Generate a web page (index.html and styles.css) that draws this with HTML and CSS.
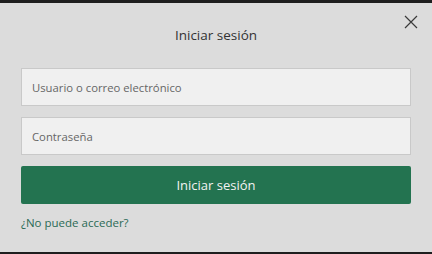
FILE: index.html
```html
<!DOCTYPE html>
<html lang="es">
<head>
<meta charset="utf-8">
<link rel="stylesheet" href="styles.css">
</head>
<body>
<div class="topbar"></div>
<div class="dialog">
  <button class="close" aria-label="Cerrar">
    <svg width="14" height="14" viewBox="0 0 14 14"><path d="M1 1L13 13M13 1L1 13" stroke="#3a3a3a" stroke-width="1.2" fill="none"/></svg>
  </button>
  <h1 class="title">Iniciar sesión</h1>
  <div class="field"><span class="ph">Usuario o correo electrónico</span></div>
  <div class="field"><span class="ph">Contraseña</span></div>
  <div class="btn">Iniciar sesión</div>
  <a class="link" href="#">¿No puede acceder?</a>
</div>
<div class="bottombar"></div>
</body>
</html>
```
FILE: styles.css
```css
html, body { margin: 0; padding: 0; }
body {
  width: 432px;
  height: 254px;
  overflow: hidden;
  background: #dcdcdc;
  font-family: "Open Sans", "Noto Sans", sans-serif;
  display: flex;
  flex-direction: column;
}
.topbar { height: 3px; background: #1e1e1e; flex: none; }
.bottombar { height: 2px; background: #1e1e1e; flex: none; }
.dialog {
  position: relative;
  flex: 1;
  display: flex;
  flex-direction: column;
  padding: 0 21px;
  background: #dcdcdc;
}
.close {
  position: absolute;
  top: 12px;
  right: 14px;
  width: 14px;
  height: 14px;
  padding: 0;
  border: 0;
  background: none;
  display: flex;
}
.title {
  margin: 22px 0 0;
  height: 20px;
  line-height: 20px;
  font-size: 13.5px;
  font-weight: 400;
  color: #333;
  text-align: center;
}
.field {
  margin-top: 23px;
  height: 36px;
  border: 1px solid #c9c9c9;
  background: #f0f0f0;
  display: flex;
  align-items: center;
  padding-left: 10px;
}
.field + .field { margin-top: 11px; }
.ph { font-size: 11.3px; color: #666; }
.btn {
  margin-top: 11px;
  height: 38px;
  border-radius: 2px;
  background: #237350;
  color: #f2f2f2;
  font-size: 13px;
  display: flex;
  align-items: center;
  justify-content: center;
}
.link {
  margin-top: 11px;
  font-size: 11.5px;
  color: #2a6a55;
  text-decoration: none;
  align-self: flex-start;
}
```
